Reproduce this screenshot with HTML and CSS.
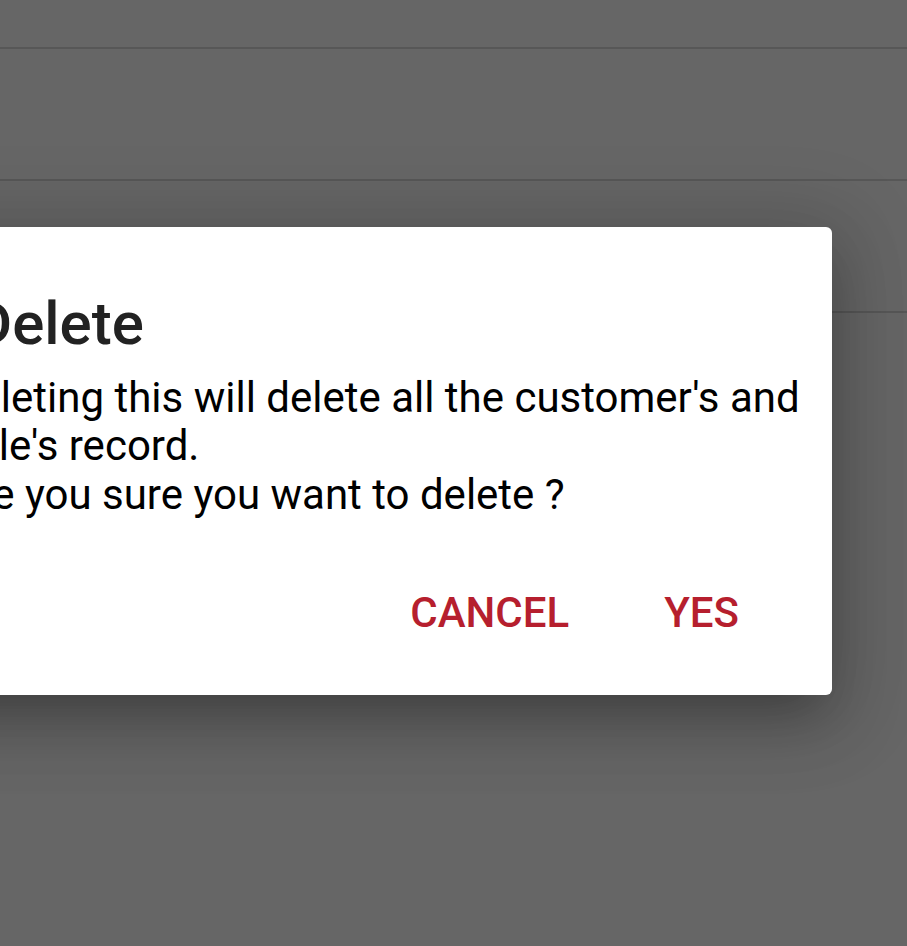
FILE: index.html
```html
<!DOCTYPE html>
<html lang="en">
<head>
<meta charset="utf-8">
<title>Delete</title>
<link rel="stylesheet" href="styles.css">
</head>
<body>
<div class="screen">
  <div class="list">
    <div class="row row-first"></div>
    <div class="row"></div>
    <div class="row"></div>
  </div>
  <div class="dialog" role="dialog">
    <h1 class="dialog-title">Delete</h1>
    <p class="dialog-body">Deleting this will delete all the customer's and<br>Sale's record.<br>Are you sure you want to delete ?</p>
    <div class="dialog-actions">
      <button class="btn">CANCEL</button>
      <button class="btn">YES</button>
    </div>
  </div>
</div>
</body>
</html>
```

FILE: styles.css
```css
html, body {
  margin: 0;
  padding: 0;
}
body {
  width: 907px;
  height: 946px;
  overflow: hidden;
  background: #666666;
  font-family: Roboto, "Noto Sans", sans-serif;
}
.screen {
  position: relative;
  width: 907px;
  height: 946px;
  overflow: hidden;
}
.list {
  display: flex;
  flex-direction: column;
}
.row {
  height: 130px;
  border-bottom: 2px solid #575757;
}
.row-first {
  height: 47px;
}
.dialog {
  position: absolute;
  top: 227px;
  left: -112px;
  width: 944px;
  background: #ffffff;
  border-radius: 6px;
  padding: 60px 63px 62px 63px;
  box-sizing: border-box;
  box-shadow: 0 28px 40px -18px rgba(0,0,0,.2), 0 24px 70px 8px rgba(0,0,0,.14), 0 9px 80px 20px rgba(0,0,0,.12);
}
.dialog-title {
  margin: 0 0 0 22px;
  font-size: 60px;
  line-height: 74px;
  font-weight: 500;
  color: #222222;
  white-space: nowrap;
}
.dialog-body {
  margin: 13px 0 0 0;
  font-size: 42px;
  line-height: 48.3px;
  font-weight: 400;
  color: #000000;
  white-space: nowrap;
}
.dialog-actions {
  display: flex;
  justify-content: flex-end;
  gap: 95px;
  margin-top: 74px;
  padding-right: 30px;
}
.btn {
  border: 0;
  background: none;
  padding: 0;
  margin: 0;
  font-family: Roboto, "Noto Sans", sans-serif;
  font-size: 42px;
  line-height: 40px;
  font-weight: 500;
  color: #b61f2e;
}
```
